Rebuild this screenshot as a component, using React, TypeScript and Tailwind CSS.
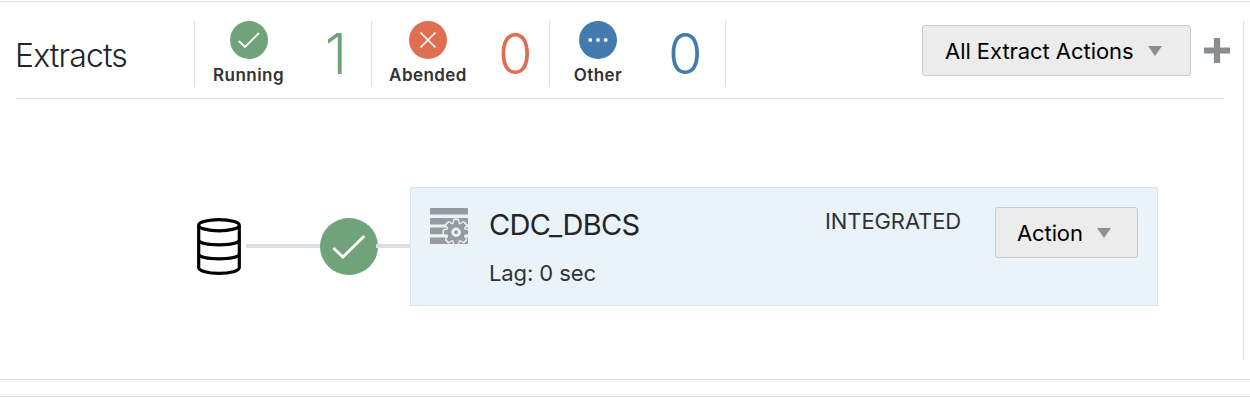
import React from "react";

function CheckBadge({ className }: { className: string }) {
  return (
    <svg className={className} viewBox="0 0 38 38" fill="none" preserveAspectRatio="none">
      <circle cx="19" cy="19" r="19" fill="#71a37b" />
      <path d="M8.8 20 L15 26 L29 12" stroke="#fff" strokeWidth="1.9" />
    </svg>
  );
}

function CrossBadge() {
  return (
    <svg className="block size-[38px]" viewBox="0 0 38 38" fill="none">
      <circle cx="19" cy="19" r="19" fill="#de6f52" />
      <path d="M11.5 11.5 L26.5 26.5 M26.5 11.5 L11.5 26.5" stroke="#fff" strokeWidth="1.6" />
    </svg>
  );
}

function DotsBadge() {
  return (
    <svg className="block size-[38px]" viewBox="0 0 38 38">
      <circle cx="19" cy="19" r="19" fill="#437bae" />
      <g fill="#fff">
        <circle cx="11.3" cy="19" r="1.9" />
        <circle cx="19" cy="19" r="1.9" />
        <circle cx="26.7" cy="19" r="1.9" />
      </g>
    </svg>
  );
}

function Caret() {
  return (
    <svg className="mt-px block h-[10px] w-[14px] shrink-0" viewBox="0 0 14 10">
      <path d="M0 0 H14 L7 10 Z" fill="#8c8e91" />
    </svg>
  );
}

function DatabaseIcon() {
  return (
    <svg className="mt-[31px] block h-[57px] w-11 shrink-0" viewBox="0 0 44 57" fill="none" stroke="#000" strokeWidth="3.2">
      <ellipse cx="22" cy="7.2" rx="20.3" ry="5.6" />
      <path d="M1.7 7.2 V49.5 C1.7 53 11 55.4 22 55.4 S42.3 53 42.3 49.5 V7.2" />
      <path d="M1.7 22.5 C5 28.3 39 28.3 42.3 22.5 M1.7 36.5 C5 42.3 39 42.3 42.3 36.5" />
    </svg>
  );
}

const teeth = [0, 45, 90, 135, 180, 225, 270, 315];

function ProcessIcon() {
  return (
    <svg className="block h-9 w-[38px] shrink-0" viewBox="0 0 38 36">
      <g fill="#979a9e">
        <rect width="38" height="6.6" y="0" rx="1" />
        <rect width="38" height="6.6" y="9.9" rx="1" />
        <rect width="38" height="6.6" y="19.6" rx="1" />
        <rect width="38" height="6.6" y="29.4" rx="1" />
      </g>
      <g transform="translate(26.1 24.2)">
        <g fill="#eaf2fa" stroke="#eaf2fa" strokeWidth="3.2" strokeLinejoin="round">
          <circle r="8.8" />
          {teeth.map((a) => (
            <path key={a} d="M-2 -8 L-1.6 -12 H1.6 L2 -8 Z" transform={`rotate(${a})`} />
          ))}
        </g>
        <g fill="#979a9e">
          <circle r="8.8" />
          {teeth.map((a) => (
            <path key={a} d="M-2.6 -8 L-2 -12 H2 L2.6 -8 Z" transform={`rotate(${a})`} />
          ))}
        </g>
        <circle r="4.7" fill="#eaf2fa" />
        <circle r="1.9" fill="#979a9e" />
      </g>
    </svg>
  );
}

export default function App() {
  return (
    <div className="flex h-[416px] w-[1250px] flex-col overflow-hidden bg-white font-['Inter',sans-serif] text-[#222426]">
      <div className="h-px shrink-0" />
      <section className="flex h-[379px] shrink-0 border-y border-[#dedede] pt-[19px]">
        <div className="flex h-[339px] w-[1244px] flex-col border-r border-[#dedede] pl-4">
          <header className="flex h-[78px] w-[1208px] border-b border-[#e1e2e2]">
            <h1 className="-ml-px w-[179px] shrink-0 pt-[15px] text-[32px] leading-10 font-[340] tracking-[-0.85px] whitespace-nowrap">Extracts</h1>

            <div className="flex h-[66px] w-[177px] shrink-0 border-l border-[#d9dddf]">
              <div className="ml-[18px] flex w-[71px] flex-col items-center">
                <CheckBadge className="block size-[38px]" />
                <span className="mt-[5px] text-[17px] leading-[22px] font-semibold tracking-[0.45px] whitespace-nowrap text-[#303234]">Running</span>
              </div>
              <span className="ml-[41px] pt-[4px] text-[56px] leading-[58px] font-[360] text-[#71a37b]">1</span>
            </div>

            <div className="flex h-[66px] w-[178px] shrink-0 border-l border-[#dedede]">
              <div className="ml-[17px] flex w-[78px] flex-col items-center">
                <CrossBadge />
                <span className="mt-[5px] text-[17px] leading-[22px] font-semibold tracking-[0.45px] whitespace-nowrap text-[#303234]">Abended</span>
              </div>
              <span className="ml-[31px] pt-[4px] text-[56px] leading-[58px] font-[360] text-[#de6f52]">0</span>
            </div>

            <div className="flex h-[66px] w-[177px] shrink-0 border-x border-[#dedede]">
              <div className="ml-[23px] flex w-[50px] flex-col items-center">
                <DotsBadge />
                <span className="mt-[5px] text-[17px] leading-[22px] font-semibold tracking-[0.45px] whitespace-nowrap text-[#303234]">Other</span>
              </div>
              <span className="ml-[45px] pt-[4px] text-[56px] leading-[58px] font-[360] text-[#437bae]">0</span>
            </div>

            <button className="mt-1 ml-[196px] flex h-[51px] w-[269px] shrink-0 items-center rounded-[3px] border border-[#c9cacb] bg-[#ececec] pl-[22px] text-[22px] text-black">
              <span className="w-[203px] pt-[2px] text-left tracking-[-0.05px] whitespace-nowrap">All Extract Actions</span>
              <Caret />
            </button>
            <svg className="mt-[17px] ml-[13px] block size-[26px] shrink-0" viewBox="0 0 26 26">
              <path d="M13 0 V25 M0 12.5 H26" stroke="#8a8d91" strokeWidth="6.2" />
            </svg>
          </header>

          <div className="mt-[88px] flex pl-[181px]">
            <DatabaseIcon />
            <div className="ml-[5px] mt-[57px] h-1 w-[75px] shrink-0 bg-[#d8dfe5]" />
            <CheckBadge className="mt-[31px] -ml-px block h-[57px] w-[58px] shrink-0" />
            <div className="mt-[57px] -ml-0.5 h-1 w-[34px] shrink-0 bg-[#d8dfe5]" />
            <article className="flex h-[119px] w-[748px] shrink-0 border border-[#d5e4f3] bg-[#eaf2fa] pl-[19px] pt-[20px]">
              <ProcessIcon />
              <div className="ml-[21px] w-[336px] shrink-0">
                <h2 className="-mt-px text-[29px] leading-[36px] tracking-[-0.7px] whitespace-nowrap">CDC_DBCS</h2>
                <p className="mt-4 text-[22px] leading-7 tracking-[-0.1px] whitespace-nowrap text-[#303234]">Lag: 0 sec</p>
              </div>
              <span className="-mt-px w-[170px] shrink-0 text-[22px] leading-7 tracking-[-0.1px] whitespace-nowrap text-[#303234]">INTEGRATED</span>
              <button className="-mt-px flex h-[51px] w-[143px] shrink-0 items-center rounded-[3px] border border-[#c9cacb] bg-[#ececec] pl-[21px] text-[22px] text-black">
                <span className="w-[80px] pt-[2px] text-left tracking-[-0.1px] whitespace-nowrap">Action</span>
                <Caret />
              </button>
            </article>
          </div>
        </div>
      </section>
      <div className="mt-4 h-px shrink-0 bg-[#dedede]" />
    </div>
  );
}
